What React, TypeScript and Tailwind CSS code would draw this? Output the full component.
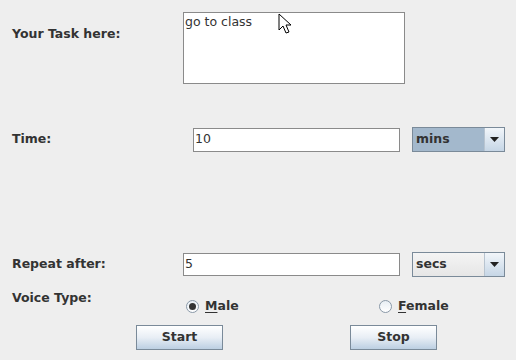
const font = { fontFamily: '"DejaVu Sans", "Liberation Sans", sans-serif' };

function Combo({ value, selected }: { value: string; selected?: boolean }) {
  return (
    <div className="flex h-[25px] w-[93px] border border-[#7a8a99] bg-[#eeeeee]">
      <div
        className={
          "flex flex-1 items-center pl-[3px] text-[12.5px] font-bold text-[#333333] " +
          (selected ? "bg-[#a3b8cc]" : "bg-gradient-to-b from-[#f4f4f4] to-[#e6e6e6]")
        }
      >
        {value}
      </div>
      <div className="flex w-[20px] items-center justify-center border-l border-[#b8c4d0] bg-gradient-to-b from-[#f2f6fa] to-[#c6d6e6]">
        <svg width="9" height="5" viewBox="0 0 9 5">
          <path d="M0 0h9L4.5 5z" fill="#222" />
        </svg>
      </div>
    </div>
  );
}

function Radio({ label, checked }: { label: string; checked?: boolean }) {
  return (
    <div className="flex items-center gap-[6px] text-[12.5px] font-bold text-[#333333]">
      <span className="flex h-[13px] w-[13px] items-center justify-center rounded-full border border-[#8a99a8] bg-gradient-to-b from-[#e8eef4] to-[#ffffff]">
        {checked && <span className="h-[7px] w-[7px] rounded-full bg-[#333333]" />}
      </span>
      <span>
        <span className="underline underline-offset-2">{label[0]}</span>
        {label.slice(1)}
      </span>
    </div>
  );
}

function Btn({ label }: { label: string }) {
  return (
    <div className="flex h-[25px] w-[87px] items-center justify-center border border-[#7a8a99] bg-gradient-to-b from-[#ffffff] via-[#e8eef5] to-[#bccfe2] text-[12.5px] font-bold text-[#333333]">
      {label}
    </div>
  );
}

export default function App() {
  return (
    <div className="relative h-[360px] w-[516px] overflow-hidden bg-[#eeeeee] text-[#333333]" style={font}>
      <div className="flex h-[84px]">
        <div className="w-[183px] pl-[12px] pt-[25px] text-[12.5px] font-bold">Your Task here:</div>
        <div className="mt-[12px] h-[72px] w-[222px] border border-[#8a8a8a] bg-white px-[1px] pt-[1px] text-[12.5px] leading-[15px]">
          go to class
        </div>
      </div>

      <div className="mt-[43px] flex h-[25px] items-center">
        <div className="w-[193px] pl-[12px] text-[12.5px] font-bold">Time:</div>
        <div className="flex h-[24px] w-[207px] items-center border border-[#8a8a8a] bg-white pl-[1px] text-[12.5px]">10</div>
        <div className="ml-[12px]">
          <Combo value="mins" selected />
        </div>
      </div>

      <div className="mt-[100px] flex h-[25px] items-center">
        <div className="w-[183px] pl-[12px] text-[12.5px] font-bold">Repeat after:</div>
        <div className="flex h-[23px] w-[217px] items-center border border-[#8a8a8a] bg-white pl-[1px] text-[12.5px]">5</div>
        <div className="ml-[12px]">
          <Combo value="secs" />
        </div>
      </div>

      <div className="mt-[10px] flex h-[24px]">
        <div className="w-[186px] pl-[12px] pt-[2px] text-[12.5px] font-bold">Voice Type:</div>
        <div className="w-[193px] pt-[10px]">
          <Radio label="Male" checked />
        </div>
        <div className="pt-[10px]">
          <Radio label="Female" />
        </div>
      </div>

      <div className="mt-[14px] flex">
        <div className="ml-[136px]">
          <Btn label="Start" />
        </div>
        <div className="ml-[127px]">
          <Btn label="Stop" />
        </div>
      </div>

      <svg className="absolute left-[278px] top-[13px]" width="14" height="22" viewBox="0 0 14 22">
        <path d="M1 1v16l4-4 3 7 3-1-3-7h5z" fill="#fff" stroke="#000" strokeWidth="1" strokeLinejoin="miter" />
      </svg>
    </div>
  );
}
